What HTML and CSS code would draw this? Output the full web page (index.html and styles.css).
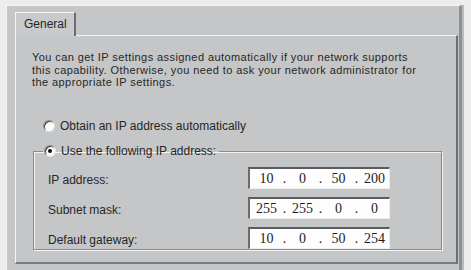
FILE: index.html
```html
<!DOCTYPE html>
<html>
<head>
<meta charset="utf-8">
<link rel="stylesheet" href="styles.css">
</head>
<body>
<div class="window">
  <div class="tabs">
    <div class="tab">General</div>
  </div>
  <div class="panel">
    <p class="intro">You can get IP settings assigned automatically if your network supports<br>this capability. Otherwise, you need to ask your network administrator for<br>the appropriate IP settings.</p>
    <div class="option">
      <span class="radio"></span>
      <span>Obtain an IP address automatically</span>
    </div>
    <fieldset class="group">
      <legend class="option legend">
        <span class="radio checked"></span>
        <span>Use the following IP address:</span>
      </legend>
      <div class="grid">
        <span class="label">IP address:</span>
        <div class="ip"><span>10</span><i>.</i><span>0</span><i>.</i><span>50</span><i>.</i><span>200</span></div>
        <span class="label">Subnet mask:</span>
        <div class="ip"><span>255</span><i>.</i><span>255</span><i>.</i><span>0</span><i>.</i><span>0</span></div>
        <span class="label">Default gateway:</span>
        <div class="ip"><span>10</span><i>.</i><span>0</span><i>.</i><span>50</span><i>.</i><span>254</span></div>
      </div>
    </fieldset>
  </div>
</div>
</body>
</html>
```
FILE: styles.css
```css
html, body {
  margin: 0;
  padding: 0;
}
body {
  background: #ededee;
  width: 471px;
  height: 270px;
  overflow: hidden;
  font-family: "Liberation Sans", Arial, sans-serif;
  font-size: 12px;
  color: #262626;
}
.window {
  margin: 5px 0 0 6px;
  width: 456px;
  height: 270px;
  background: #c5c6c8;
  border-left: 1px solid #f4f4f4;
  border-top: 1px solid #f4f4f4;
  border-right: 3px solid #8e8f91;
  box-shadow: 2px 0 0 #b9babc;
  padding: 6px 0 0 8px;
  box-sizing: border-box;
}
.tabs {
  display: flex;
  height: 23px;
  position: relative;
  z-index: 1;
}
.tab {
  width: 61px;
  box-sizing: border-box;
  height: 24px;
  background: #c9cacc;
  border-top: 1px solid #f6f6f6;
  border-left: 1px solid #f6f6f6;
  border-right: 2px solid #6b6c6e;
  padding: 4px 0 0 8px;
}
.panel {
  width: 443px;
  height: 229px;
  box-sizing: border-box;
  border-top: 1px solid #f6f6f6;
  border-left: 1px solid #f6f6f6;
  border-right: 2px solid #6e6f71;
  border-bottom: 2px solid #7b7c7e;
  padding: 15px 0 0 16px;
}
.intro {
  margin: 0;
  white-space: nowrap;
  font-size: 11px;
  letter-spacing: 0.42px;
  line-height: 12.7px;
}
.option {
  display: flex;
  align-items: center;
  gap: 5px;
  height: 14px;
}
.panel > .option {
  margin: 30px 0 0 11px;
}
.radio {
  width: 12px;
  height: 12px;
  box-sizing: border-box;
  border-radius: 50%;
  background: #fbfbfb;
  border: 1px solid #8a8a8c;
  border-right-color: #e4e4e4;
  border-bottom-color: #e4e4e4;
  box-shadow: inset 1px 1px 0 #404040;
  display: flex;
  align-items: center;
  justify-content: center;
}
.radio.checked::after {
  content: "";
  width: 4px;
  height: 4px;
  border-radius: 50%;
  background: #111;
}
.group {
  margin: 11px 0 0 1px;
  width: 409px;
  height: 106px;
  box-sizing: border-box;
  border: 1px solid #8b8c8e;
  border-right-color: #858688;
  box-shadow: 1px 1px 0 #f2f2f2, inset 1px 1px 0 #f2f2f2;
  padding: 9px 0 0 14px;
}
.legend {
  margin-left: -5px;
  padding: 0 3px 0 1px;
}
.grid {
  display: grid;
  grid-template-columns: 200px 142px;
  grid-auto-rows: 22px;
  row-gap: 8px;
  align-items: center;
}
.label {
  padding-top: 3px;
}
.ip {
  height: 22px;
  box-sizing: border-box;
  background: #fdfdfd;
  border-top: 2px solid #5a5b5d;
  border-left: 2px solid #6a6b6d;
  border-right: 1px solid #ededed;
  border-bottom: 1px solid #ededed;
  display: grid;
  grid-template-columns: 29px 7px 29px 7px 29px 7px 29px;
  padding-left: 2px;
  align-items: center;
  font-family: "Liberation Serif", "Times New Roman", serif;
  font-size: 14px;
  color: #1e1e1e;
}
.ip span, .ip i {
  text-align: center;
  font-style: normal;
}
```
